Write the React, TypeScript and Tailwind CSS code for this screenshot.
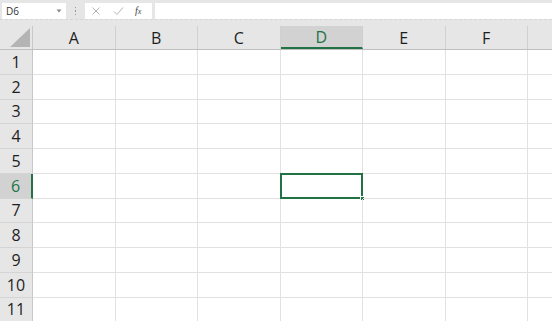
import React from 'react';

const COLS = ['A', 'B', 'C', 'D', 'E', 'F', ''];
const ROWS = [1, 2, 3, 4, 5, 6, 7, 8, 9, 10, 11];
const SEL_COL = 3;
const SEL_ROW = 6;

export default function App() {
  return (
    <div className="w-[552px] h-[321px] overflow-hidden bg-white font-['Open_Sans','Noto_Sans',sans-serif] text-[#1e1e1e]">
      {/* Formula bar */}
      <div className="h-[20px] bg-[#e6e6e6] flex items-start pt-[3px] border-b border-dashed border-[#d6d6d6]">
        <div className="ml-[2px] w-[64px] h-[16px] bg-white flex items-center justify-between pl-[4px] pr-[4px]">
          <span className="text-[10px] leading-none text-[#333]">D6</span>
          <svg width="6" height="4" viewBox="0 0 6 4">
            <path d="M0.5 0.5 L5.5 0.5 L3 3.5 Z" fill="#888" />
          </svg>
        </div>
        <div className="w-[19px] h-[16px] flex flex-col items-center justify-center gap-[2px]">
          <span className="w-[1.5px] h-[1.5px] bg-[#999]" />
          <span className="w-[1.5px] h-[1.5px] bg-[#999]" />
          <span className="w-[1.5px] h-[1.5px] bg-[#999]" />
        </div>
        <div className="w-[67px] h-[16px] bg-white flex items-center">
          <svg width="10" height="10" viewBox="0 0 10 10" className="ml-[6px]">
            <path d="M1.5 1.5 L8.5 8.5 M8.5 1.5 L1.5 8.5" stroke="#b5b5b5" strokeWidth="1" />
          </svg>
          <svg width="11" height="10" viewBox="0 0 11 10" className="ml-[12px]">
            <path d="M1 5.5 L4 8.5 L10 1.5" stroke="#b5b5b5" strokeWidth="1" fill="none" />
          </svg>
          <span className="ml-[11px] text-[10px] italic leading-none font-['Liberation_Serif',serif] text-[#444]">
            <span>f</span>
            <span className="text-[8px]">x</span>
          </span>
        </div>
        <div className="ml-[3px] flex-1 h-[16px] bg-white" />
      </div>
      <div className="h-[6px] bg-[#e6e6e6]" />

      {/* Column headers */}
      <div className="flex h-[24px] bg-[#e6e6e6] border-b border-[#bfbfbf]">
        <div className="w-[33px] shrink-0 border-r border-[#c8c8c8] relative">
          <svg width="20" height="19" viewBox="0 0 20 19" className="absolute right-[2px] bottom-[2px]">
            <path d="M20 0 L20 19 L0 19 Z" fill="#b4b4b4" />
          </svg>
        </div>
        {COLS.map((c, i) => (
          <div
            key={i}
            className={`w-[82.5px] shrink-0 flex items-center justify-center text-[16px] border-r border-[#d0d0d0] ${
              i === SEL_COL ? 'bg-[#d2d2d2] text-[#217346] border-b-2 border-b-[#217346]' : ''
            }`}
          >
            {c}
          </div>
        ))}
      </div>

      {/* Rows */}
      {ROWS.map(r => (
        <div key={r} className="flex h-[24.75px]">
          <div
            className={`w-[33px] shrink-0 flex items-center justify-center text-[16px] border-b border-[#d4d4d4] ${
              r === SEL_ROW
                ? 'bg-[#d2d2d2] text-[#217346] border-r-2 border-r-[#217346]'
                : 'bg-[#e6e6e6] border-r border-r-[#c8c8c8]'
            }`}
          >
            {r}
          </div>
          {COLS.map((_, i) => (
            <div key={i} className="w-[82.5px] shrink-0 border-r border-b border-[#e1e1e1] relative">
              {i === SEL_COL && r === SEL_ROW && (
                <div className="absolute -left-[1px] -top-[1px] w-[83.5px] h-[25.75px] border-2 border-[#217346]">
                  <div className="absolute -right-[4px] -bottom-[4px] w-[5px] h-[5px] bg-[#217346] border border-white" />
                </div>
              )}
            </div>
          ))}
        </div>
      ))}
    </div>
  );
}
